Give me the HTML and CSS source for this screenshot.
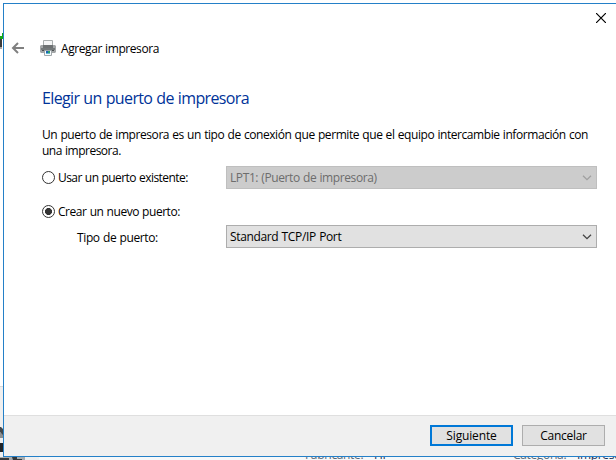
FILE: index.html
```
<!DOCTYPE html>
<html lang="es">
<head>
<meta charset="utf-8">
<title>Agregar impresora</title>
<link rel="stylesheet" href="styles.css">
</head>
<body>
<main class="desktop">
  <svg class="backdrop" width="616" height="460" aria-hidden="true">
    <path fill="#efefef" d="M0 387h3v70h613v3H0z"/>
    <path fill="#f6f8f9" d="M39 457h577v3H39z"/>
    <path fill="#d8d8d8" d="M0 386h3v1H0z"/>
    <path fill="#16a816" d="M2 33h1v3h1v3H0v-3h2z"/>
    <path fill="#3b3b3b" d="M0 39h2v8H0z"/>
    <path fill="#aaa" d="M0 47h2v2H0z"/>
    <path fill="#42474a" d="M0 427h1l2 2v6H2l-2-3z"/>
    <path fill="#8b8f91" d="M0 432l3 3v3H0z"/>
    <path fill="#202326" d="M0 443h3v9H0z"/>
    <path fill="#a7abad" d="M0 457h25v3H0z"/>
    <path fill="#34383a" d="M0 458h9v2H0zM12 457h5v2h5v1h-9z"/>
  </svg>
  <span class="behind behind-maker">Fabricante:</span>
  <span class="behind behind-brand">HP</span>
  <span class="behind behind-category">Categoría:</span>
  <span class="behind behind-kind">Impresora</span>

  <section class="dialog">
    <header class="titlebar">
      <svg class="back" width="14" height="12" viewBox="0 0 14 12"><path d="M13 6H2M7 1L2 6l5 5" fill="none" stroke="#808080" stroke-width="2"/></svg>
      <svg class="printer" width="16" height="16" viewBox="0 0 16 16">
        <path d="M3.5.5h9v6h-9z" fill="#f4f5f5" stroke="#a8adad"/>
        <path d="M1 5h2v1h10V5h2l1 1v6l-1 1H1l-1-1V6z" fill="#a3a6a7"/>
        <path d="M3 5h10v3H3z" fill="#6d7172"/>
        <path d="M1 8h14v2H1z" fill="#737879"/>
        <path d="M2 10h12v1H2z" fill="#4a4e50"/>
        <path d="M4.500 10.500h7v5h-7z" fill="#f7fafb" stroke="#a0a7aa"/>
        <path d="M6 11h2v2H6z" fill="#1b62b5"/><path d="M8 11h2v2H8z" fill="#27a06b"/><path d="M6 13h4v1H6z" fill="#63b8d3"/>
      </svg>
      <span class="caption">Agregar impresora</span>
      <svg class="close" width="10" height="10" viewBox="0 0 10 10"><path d="M0 0l10 10M10 0L0 10" stroke="#000" stroke-width="1.200"/></svg>
    </header>
    <div class="content">
      <h1>Elegir un puerto de impresora</h1>
      <p><span class="line-one">Un puerto de impresora es un tipo de conexión que permite que el equipo intercambie información con</span><span class="line-two">una impresora.</span></p>
      <div class="row">
        <span class="radio"></span><span class="label existing">Usar un puerto existente:</span>
        <div class="select disabled"><span>LPT1: (Puerto de impresora)</span><svg width="10" height="6" viewBox="0 0 10 6"><path d="M1 .7L5 4.700 9 .7"/></svg></div>
      </div>
      <div class="row new-row"><span class="radio checked"></span><span class="label new">Crear un nuevo puerto:</span></div>
      <div class="row type-row">
        <span class="label type">Tipo de puerto:</span>
        <div class="select"><span>Standard TCP/IP Port</span><svg width="10" height="6" viewBox="0 0 10 6"><path d="M1 .7L5 4.700 9 .7"/></svg></div>
      </div>
    </div>
    <footer class="footer">
      <button class="button primary">Siguiente</button>
      <button class="button cancel">Cancelar</button>
    </footer>
  </section>
</main>
</body>
</html>
```
FILE: styles.css
```
* { box-sizing: border-box; }
body { margin: 0; background: #fff; color: #000; font: 12px/15px "Open Sans", "Noto Sans", sans-serif; word-spacing: .5px; }
.desktop { position: relative; width: 616px; height: 460px; overflow: hidden; padding: 3px 0 0 3px; white-space: nowrap; }
.backdrop { position: absolute; left: 0; top: 0; }
.behind { position: absolute; top: 447px; color: #5a6878; letter-spacing: -.35px; }
.behind-maker { left: 305px; }
.behind-brand { left: 374px; color: #1e2f55; }
.behind-category { left: 513px; }
.behind-kind { left: 577px; color: #1e2f55; }

.dialog { position: relative; display: flex; flex-direction: column; width: 620px; height: 454px; border: 1px solid #2480c8; background: #fff; }
.titlebar { display: flex; align-items: center; height: 77px; padding: 11px 0 0 7px; margin-bottom: 7px; position: relative; }
.back { margin-right: 15px; }
.printer { margin-right: 5px; }
.caption { letter-spacing: -.42px; }
.close { position: absolute; left: 592px; top: 9px; }

.content { flex: 1; padding: 0 0 0 38px; }
h1 { margin: 0; color: #003399; font-size: 16px; line-height: 20px; font-weight: 400; letter-spacing: -.64px; }
p { margin: 19px 0 7px; line-height: 16px; }
p span { display: block; }
.line-one { letter-spacing: -.428px; }
.line-two { letter-spacing: -.5px; }
.row { display: flex; align-items: center; height: 23px; }
.radio { width: 13px; height: 13px; margin-right: 3px; border: 1px solid #333; border-radius: 50%; background: #fff; }
.checked { background: radial-gradient(circle, #333 3.2px, #fff 3.8px); }
.label { width: 168px; }
.existing { letter-spacing: -.56px; }
.new { letter-spacing: -.46px; }
.type { width: 149px; margin-left: 35px; padding-top: 2px; letter-spacing: -.38px; }
.select { display: flex; align-items: center; justify-content: space-between; width: 371px; height: 23px; padding: 0 4px 0 3px; border: 1px solid #adadad; background: #e1e1e1; letter-spacing: -.35px; }
.select path { fill: none; stroke: #444; stroke-width: 1.3; }
.disabled { border-color: #bfbfbf; background: #ccc; color: #6d6d6d; letter-spacing: -.4px; }
.disabled path { stroke: #a0a0a0; }
.new-row { margin-top: 11px; }
.type-row { margin-top: 2px; }

.footer { display: flex; gap: 9px; height: 41px; padding: 9px 0 0 426px; border-top: 1px solid #dfdfdf; background: #f0f0f0; }
.button { width: 83px; height: 21px; padding: 0; border: 1px solid #adadad; background: #e1e1e1; color: #000; font: inherit; letter-spacing: -.27px; }
.primary { border: 2px solid #0078d7; letter-spacing: -.15px; }
```
